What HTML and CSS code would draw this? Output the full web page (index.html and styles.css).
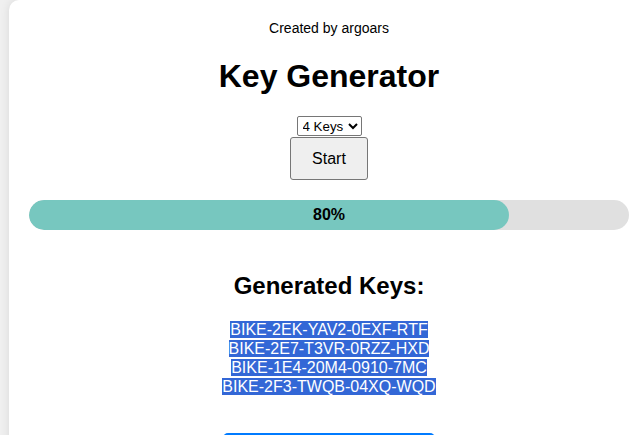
FILE: index.html
```html
<!DOCTYPE html>
<html>
<head>
<meta charset="utf-8">
<title>Key Generator</title>
<link rel="stylesheet" href="styles.css">
</head>
<body>
<div class="card">
  <p class="credit">Created by argoars</p>
  <h1 class="title">Key Generator</h1>
  <div class="controls">
    <select class="count">
      <option>1 Key</option>
      <option>2 Keys</option>
      <option>3 Keys</option>
      <option selected>4 Keys</option>
      <option>5 Keys</option>
    </select>
    <button class="start">Start</button>
  </div>
  <div class="progress">
    <div class="progress-fill" style="width: 80%"></div>
    <span class="progress-label">80%</span>
  </div>
  <h2 class="subtitle">Generated Keys:</h2>
  <div class="keys">
    <span class="sel">BIKE-2EK-YAV2-0EXF-RTF </span><br>
    <span class="sel">BIKE-2E7-T3VR-0RZZ-HXD </span><br>
    <span class="sel">BIKE-1E4-20M4-0910-7MC </span><br>
    <span class="sel">BIKE-2F3-TWQB-04XQ-WQD</span>
  </div>
  <button class="copy">Copy Keys to Clipboard</button>
</div>
</body>
</html>
```
FILE: styles.css
```css
body {
  margin: 0;
  background: #f0f0f0;
  font-family: "Liberation Sans", Arial, sans-serif;
  color: #000;
}
.card {
  margin-left: 9px;
  width: 600px;
  padding: 20px;
  background: #fff;
  border-radius: 10px;
  box-shadow: 0 0 10px rgba(0, 0, 0, 0.1);
  text-align: center;
}
.credit {
  margin: 0;
  font-size: 14px;
  line-height: 16px;
}
.title {
  font-size: 32px;
  margin: 22px 0 21px;
}
.controls {
  display: flex;
  flex-direction: column;
  align-items: center;
  gap: 1px;
}
.count {
  font-family: "Liberation Sans", Arial, sans-serif;
  font-size: 13.33px;
  height: 20px;
  padding: 0 1px;
  border: 1px solid #767676;
  border-radius: 2px;
  background: #fff;
  color: #000;
}
.start {
  font-family: "Liberation Sans", Arial, sans-serif;
  font-size: 16px;
  line-height: 17px;
  padding: 12px 21px;
  border: 1px solid #767676;
  border-radius: 3px;
  background: #efefef;
  color: #000;
}
.progress {
  position: relative;
  margin-top: 20px;
  height: 30px;
  background: #e0e0e0;
  border-radius: 15px;
  overflow: hidden;
}
.progress-fill {
  height: 100%;
  background: #77c7bf;
  border-radius: 15px;
}
.progress-label {
  position: absolute;
  left: 0;
  right: 0;
  top: 0;
  line-height: 30px;
  font-weight: bold;
  font-size: 16px;
}
.subtitle {
  font-size: 24px;
  margin: 42px 0 20px;
}
.keys {
  font-size: 16px;
  line-height: 19px;
}
.sel {
  background: #3367d6;
  color: #fff;
}
.copy {
  margin-top: 37px;
  font-family: "Liberation Sans", Arial, sans-serif;
  font-size: 16px;
  padding: 10px 22px;
  border: none;
  border-radius: 5px;
  background: #007bff;
  color: #fff;
}
```
